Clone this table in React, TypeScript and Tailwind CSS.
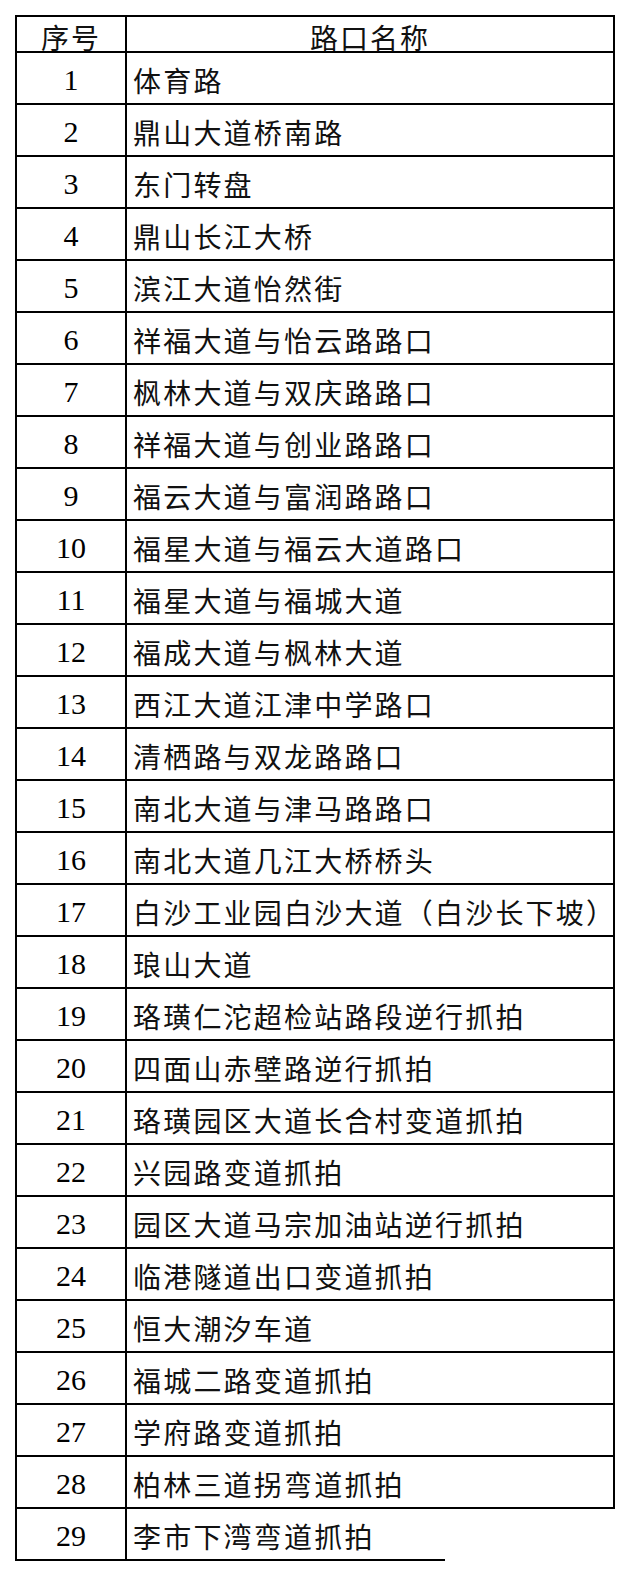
import React from "react";

const names = [
  "体育路",
  "鼎山大道桥南路",
  "东门转盘",
  "鼎山长江大桥",
  "滨江大道怡然街",
  "祥福大道与怡云路路口",
  "枫林大道与双庆路路口",
  "祥福大道与创业路路口",
  "福云大道与富润路路口",
  "福星大道与福云大道路口",
  "福星大道与福城大道",
  "福成大道与枫林大道",
  "西江大道江津中学路口",
  "清栖路与双龙路路口",
  "南北大道与津马路路口",
  "南北大道几江大桥桥头",
  "白沙工业园白沙大道（白沙长下坡）",
  "琅山大道",
  "珞璜仁沱超检站路段逆行抓拍",
  "四面山赤壁路逆行抓拍",
  "珞璜园区大道长合村变道抓拍",
  "兴园路变道抓拍",
  "园区大道马宗加油站逆行抓拍",
  "临港隧道出口变道抓拍",
  "恒大潮汐车道",
  "福城二路变道抓拍",
  "学府路变道抓拍",
  "柏林三道拐弯道抓拍",
  "李市下湾弯道抓拍",
];

const cjk = "font-['Noto_Sans_CJK_SC',sans-serif]";
const serif = "font-['Liberation_Serif','Noto_Sans_CJK_SC',serif]";

function Row({ n, name, last }: { n: number; name: string; last?: boolean }) {
  return (
    <div className={`flex h-[52px] ${last ? "" : "border-b-2 border-black"}`}>
      <div
        className={`w-[110px] shrink-0 border-r-2 border-black flex items-center justify-center pt-[4px] text-[30px] leading-none text-black ${serif}`}
      >
        {n}
      </div>
      <div
        className={`flex-1 flex items-center pl-[6px] pt-[3px] text-[28px] leading-none tracking-[2.2px] whitespace-nowrap text-[#111] ${cjk}`}
      >
        {name}
      </div>
    </div>
  );
}

export default function App() {
  return (
    <div className="w-[630px] h-[1576px] bg-white pt-[15px] pl-[15px]">
      <div className="w-[600px] border-l-2 border-r-2 border-t-2 border-black">
        <div className="flex h-[36px] border-b-2 border-black">
          <div
            className={`w-[110px] shrink-0 border-r-2 border-black flex items-center justify-center pt-[5px] text-[28px] leading-none tracking-[2px] text-[#111] ${cjk}`}
          >
            序号
          </div>
          <div
            className={`flex-1 flex items-center justify-center pt-[5px] text-[28px] leading-none tracking-[2px] text-[#111] ${cjk}`}
          >
            路口名称
          </div>
        </div>
        {names.slice(0, 28).map((name, i) => (
          <Row key={i} n={i + 1} name={name} />
        ))}
      </div>
      <div className="w-[600px] border-l-2 border-black">
        <div className="flex h-[50px]">
          <div
            className={`w-[110px] shrink-0 border-r-2 border-black flex items-center justify-center pt-[4px] text-[30px] leading-none text-black ${serif}`}
          >
            29
          </div>
          <div
            className={`flex-1 flex items-center pl-[6px] pt-[3px] text-[28px] leading-none tracking-[2.2px] whitespace-nowrap text-[#111] ${cjk}`}
          >
            {names[28]}
          </div>
        </div>
      </div>
      <div className="w-[430px] h-[2px] bg-black" />
    </div>
  );
}
